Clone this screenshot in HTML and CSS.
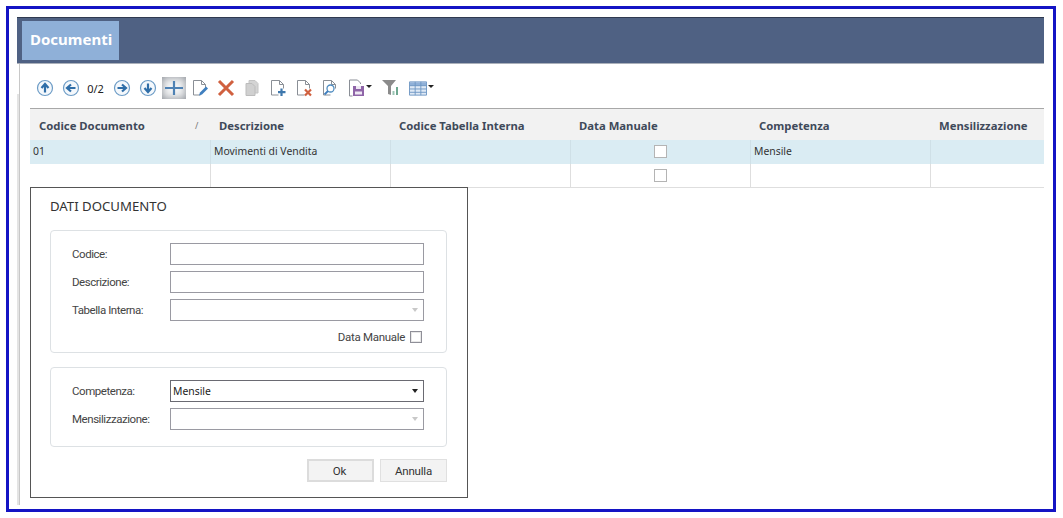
FILE: index.html
```html
<!DOCTYPE html>
<html lang="it">
<head>
<meta charset="utf-8">
<title>Documenti</title>
<link rel="stylesheet" href="styles.css">
</head>
<body>
<svg class="defs" width="0" height="0" aria-hidden="true">
  <symbol id="page" viewBox="0 0 18 18"><path d="M2.500 1.500h8l4 4v4M2.500 1.500v14.500h7M10.500 1.500v4h4" fill="none" stroke="#8a8f96" stroke-width="1"/></symbol>
  <symbol id="circle" viewBox="0 0 18 18"><circle cx="9" cy="9" r="7.500" fill="#f4f8fc" stroke="#6d9cc6" stroke-width="1.200"/></symbol>
</svg>
<div class="frame">
  <header class="titlebar"><div class="tab">Documenti</div></header>
  <div class="content">
    <div class="gutter"></div>
    <main class="panel">
      <div class="toolbar">
        <span class="btn"><svg width="18" height="18" viewBox="0 0 18 18"><use href="#circle"/><path d="M9 13.500V6M5.500 9L9 5l3.500 4" fill="none" stroke="#2f6ea8" stroke-width="2.200"/></svg></span>
        <span class="btn"><svg width="18" height="18" viewBox="0 0 18 18"><use href="#circle"/><path d="M13.500 9H6M9 5.500L5 9l4 3.500" fill="none" stroke="#2f6ea8" stroke-width="2.200"/></svg></span>
        <span class="pager">0/2</span>
        <span class="btn"><svg width="18" height="18" viewBox="0 0 18 18"><use href="#circle"/><path d="M4.500 9H12M9 5.500L13 9l-4 3.500" fill="none" stroke="#2f6ea8" stroke-width="2.200"/></svg></span>
        <span class="btn"><svg width="18" height="18" viewBox="0 0 18 18"><use href="#circle"/><path d="M9 4.500V12M5.500 9L9 13l3.500-4" fill="none" stroke="#2f6ea8" stroke-width="2.200"/></svg></span>
        <span class="btn btn-active"><svg width="20" height="20" viewBox="0 0 20 20"><path d="M10 3v14M1 10h18" stroke="#4f82b4" stroke-width="2.200"/></svg></span>
        <span class="btn"><svg width="18" height="18" viewBox="0 0 18 18"><use href="#page"/><path d="M8 16.500l1-3 6-6 2 2-6 6z" fill="#3f7fbf"/></svg></span>
        <span class="btn"><svg width="18" height="18" viewBox="0 0 18 18"><path d="M2 2l14 14M16 2L2 16" stroke="#d0603f" stroke-width="3"/></svg></span>
        <span class="btn"><svg width="18" height="18" viewBox="0 0 18 18"><path d="M6 1.500h6l3 3v9.500H6z" fill="#d4d4d4" stroke="#c4c4c4"/><path d="M3 4.500h6l3 3v9H3z" fill="#d0d0d0" stroke="#bcbcbc"/></svg></span>
        <span class="btn"><svg width="18" height="18" viewBox="0 0 18 18"><use href="#page"/><path d="M12.500 9.500v7.500M9 13.200h7.500" stroke="#3f78ad" stroke-width="2.200"/></svg></span>
        <span class="btn"><svg width="18" height="18" viewBox="0 0 18 18"><use href="#page"/><path d="M10 10.500l6 6M16 10.500l-6 6" stroke="#d0603f" stroke-width="2.200"/></svg></span>
        <span class="btn"><svg width="18" height="18" viewBox="0 0 18 18"><use href="#page"/><circle cx="9.500" cy="9.500" r="3.500" fill="#fff" stroke="#4f8cc0" stroke-width="1.300"/><path d="M7 12l-3.500 3.500" stroke="#3f7fbf" stroke-width="1.800"/></svg></span>
        <span class="btn btn-menu btn-save"><svg width="18" height="18" viewBox="0 0 18 18"><path d="M1.500 1h8l3 3v1M1.500 1v16h3" fill="none" stroke="#8a8f96"/><path d="M5 7h11v10H5z" fill="#8f65a8"/><path d="M8 7h5v3H8zM7 12.500h7v3H7z" fill="#efe9f3"/></svg><i class="caret"></i></span>
        <span class="btn btn-filter"><svg width="18" height="18" viewBox="0 0 18 18"><path d="M0 1h14L9 7v9l-3-1V7z" fill="#8b8b8b"/><path d="M10.500 12h2v4h-2z" fill="#9cc4b4"/><path d="M14 8h2v8h-2z" fill="#6fa890"/></svg></span>
        <span class="btn btn-menu btn-table"><svg width="19" height="15" viewBox="0 0 19 15"><path d="M.5.500h18v14H.5z" fill="#dfe9f5" stroke="#6f97c4"/><path d="M1 1h17v3.500H1z" fill="#8fb0d8"/><path d="M.5 4.500h18M.5 8h18M.5 11.500h18M6.500.500v14M12.500.500v14" fill="none" stroke="#6f97c4"/></svg><i class="caret"></i></span>
      </div>
      <div class="grid">
        <div class="grid-row grid-head">
          <div class="hcell hcell-sort">Codice Documento<span class="sort">/</span></div>
          <div class="hcell">Descrizione</div>
          <div class="hcell">Codice Tabella Interna</div>
          <div class="hcell">Data Manuale</div>
          <div class="hcell">Competenza</div>
          <div class="hcell">Mensilizzazione</div>
        </div>
        <div class="grid-row row-selected">
          <div class="cell">01</div>
          <div class="cell">Movimenti di Vendita</div>
          <div class="cell"></div>
          <div class="cell cell-check"><span class="check"></span></div>
          <div class="cell">Mensile</div>
          <div class="cell"></div>
        </div>
        <div class="grid-row row-last">
          <div class="cell"></div>
          <div class="cell"></div>
          <div class="cell"></div>
          <div class="cell cell-check"><span class="check"></span></div>
          <div class="cell"></div>
          <div class="cell"></div>
        </div>
      </div>
      <section class="dialog">
        <h2 class="dialog-title">DATI DOCUMENTO</h2>
        <div class="group">
          <div class="field"><label class="label">Codice:</label><div class="input"></div></div>
          <div class="field"><label class="label">Descrizione:</label><div class="input"></div></div>
          <div class="field"><label class="label">Tabella Interna:</label><div class="input input-select"><i class="arrow arrow-off"></i></div></div>
          <div class="check-row"><span>Data Manuale</span><span class="check check-form"></span></div>
        </div>
        <div class="group group-second">
          <div class="field"><label class="label">Competenza:</label><div class="input input-select input-dark">Mensile<i class="arrow"></i></div></div>
          <div class="field"><label class="label">Mensilizzazione:</label><div class="input input-select"><i class="arrow arrow-off"></i></div></div>
        </div>
        <div class="actions">
          <button class="button button-default">Ok</button>
          <button class="button">Annulla</button>
        </div>
      </section>
    </main>
  </div>
</div>
</body>
</html>
```

FILE: styles.css
```css
* { box-sizing: border-box; }
html, body { margin: 0; height: 100%; background: #fff; }
body { font-family: "Noto Sans", "Liberation Sans", sans-serif; overflow: hidden; }
.defs { position: absolute; }

.frame {
  width: 1050px;
  height: 506px;
  margin: 6px;
  border: 3px solid #1414c4;
  padding: 8px 9px 4px 8px;
  display: flex;
  flex-direction: column;
}

.titlebar {
  height: 47px;
  flex: none;
  background: #4f6183;
  border-top: 1px solid #2f3a50;
  border-bottom: 1px solid #aab0ba;
  padding: 3px 0 0 5px;
}
.tab {
  width: 97px;
  height: 39px;
  background: #8fb0d8;
  color: #fff;
  font: bold 15px/37px "Noto Sans", sans-serif;
  padding-left: 8px;
}

.content { flex: 1; display: flex; min-height: 0; }
.gutter { width: 2px; margin-top: 30px; background: #e4e4e4; }
.panel { flex: 1; position: relative; border-left: 1px solid #c8c8c8; padding-left: 10px; }

.toolbar { height: 44px; display: flex; align-items: center; padding: 4px 0 0 2px; }
.btn { width: 26px; height: 22px; display: flex; align-items: center; justify-content: center; flex: none; }
.btn-active { width: 24px; margin: 0 1px; background: #f4f5f6; box-shadow: inset 0 0 8px #858a91; }
.btn-menu { justify-content: flex-start; }
.btn-save { width: 30px; padding-left: 5px; }
.btn-filter { margin-left: 5px; }
.btn-table { width: 30px; padding-left: 5px; gap: 1px; }
.pager { width: 25px; padding-right: 2px; text-align: center; font-size: 11px; color: #222; flex: none; }
.caret { width: 0; height: 0; margin-top: -4px; border: 3px solid transparent; border-top: 3px solid #222; border-bottom: 0; }

.grid { border-top: 1px solid #a8a8a8; }
.grid-row { display: grid; grid-template-columns: 181px repeat(4, 180px) 1fr; }
.grid-head { height: 31px; background: #f2f2f2; }
.hcell {
  position: relative;
  padding-left: 8px;
  font: bold 11.300px/33px "Noto Sans", sans-serif;
  color: #3f4a5a;
}
.hcell-sort { padding-left: 9px; }
.sort { position: absolute; left: 165px; top: 0; font-weight: normal; font-size: 9px; color: #777; }
.grid-row:not(.grid-head) { height: 24px; }
.row-selected { background: #daecf3; }
.row-selected .check { margin-top: -1px; }
.row-last { border-bottom: 1px solid #dedede; }
.cell {
  border-right: 1px solid #dedede;
  padding-left: 3px;
  font-size: 10.400px;
  line-height: 23px;
  color: #333;
}
.row-selected .cell { border-right-color: #cfe0e7; }
.cell:last-child { border-right: 0; }
.cell-check { display: flex; align-items: center; justify-content: center; padding: 0; }
.check { display: block; width: 13px; height: 13px; border: 1px solid #b4b4b4; background: #fff; }

.dialog {
  position: absolute;
  left: 10px;
  top: 123px;
  width: 438px;
  height: 311px;
  background: #fff;
  border: 1px solid #555;
  padding: 0 20px 0 19px;
}
.dialog-title { margin: 0; height: 42px; font-weight: normal; font-size: 13.200px; line-height: 36px; color: #333; }

.group { height: 123px; border: 1px solid #dde1e4; border-radius: 4px; padding: 12px 22px 0 21px; }
.group-second { height: 80px; margin-top: 14px; }
.field { display: flex; height: 22px; margin-bottom: 6px; align-items: center; }
.label { width: 98px; font: 11.500px "Roboto", sans-serif; letter-spacing: -0.45px; color: #444; }
.input { flex: 1; height: 22px; border: 1px solid #9a9aa2; background: #fff; position: relative; font-size: 10.400px; line-height: 20px; padding-left: 2px; color: #222; }
.input-dark { border-color: #6a6a72; }
.arrow { position: absolute; right: 5px; top: 8px; width: 0; height: 0; border: 3px solid transparent; border-top: 4px solid #222; border-bottom: 0; }
.arrow-off { border-top-color: #c8c8c8; }
.check-row { display: flex; justify-content: flex-end; align-items: center; gap: 5px; margin: 10px 2px 0 0; font: 11.500px "Roboto", sans-serif; letter-spacing: -0.3px; color: #444; height: 12px; }
.check-form { width: 12px; height: 12px; border-color: #8f8f98; box-shadow: inset 0 0 0 1px #e8e8e8; }

.actions { display: flex; justify-content: flex-end; gap: 6px; margin-top: 12px; }
.button { width: 67px; height: 23px; border: 1px solid #e0e0e0; background: #f3f3f3; font: 11.500px "Roboto", sans-serif; letter-spacing: -0.2px; color: #333; padding: 0; }
.button-default { border: 2px solid #dcdcdc; padding-right: 2px; }
```
